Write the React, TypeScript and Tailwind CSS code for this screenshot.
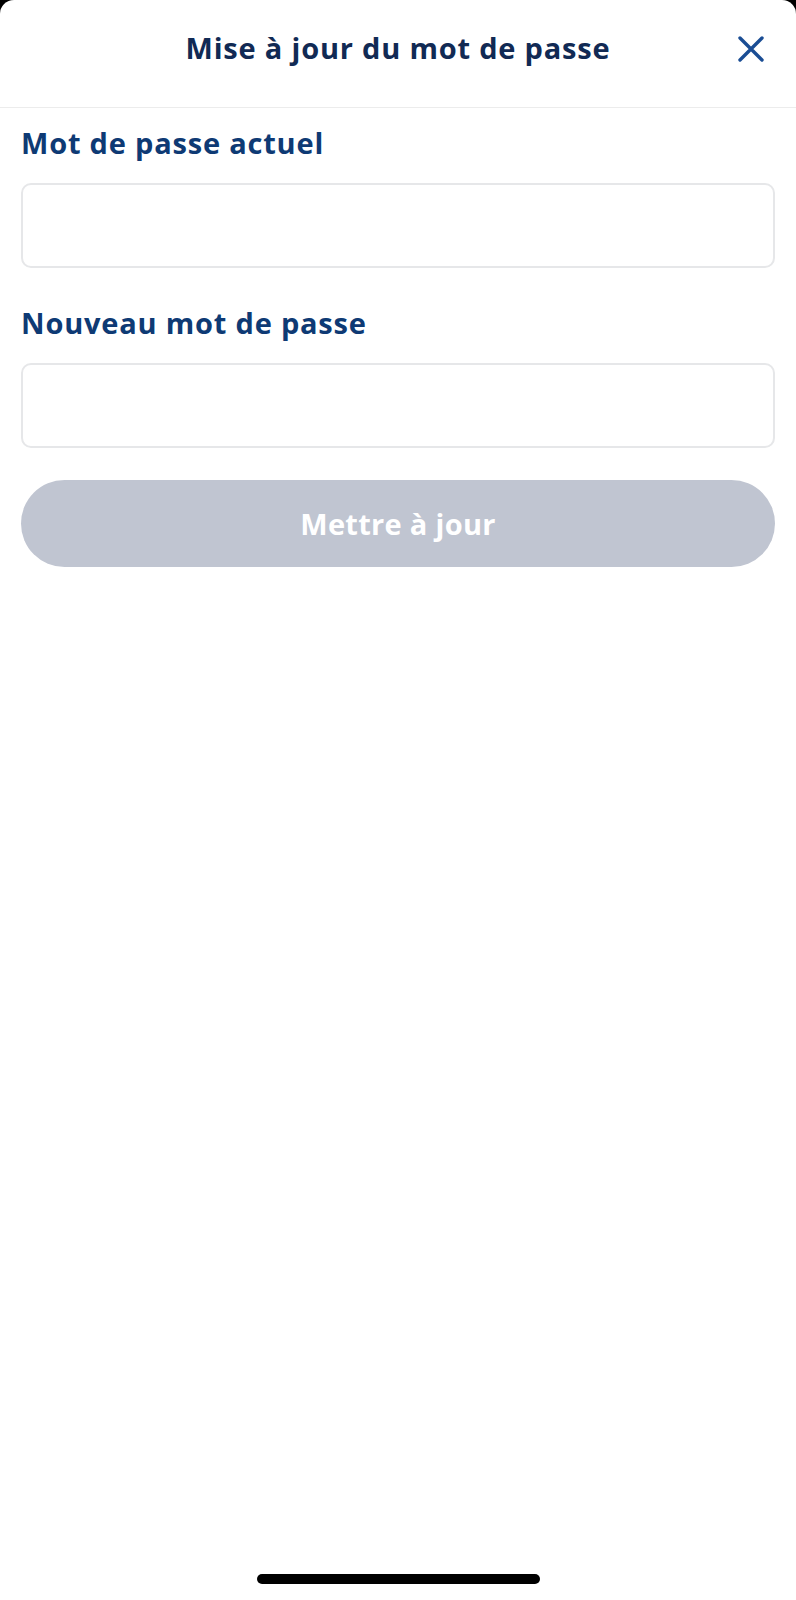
import React from "react";

export default function App() {
  const font = { fontFamily: "'Open Sans', 'Noto Sans', sans-serif" };
  return (
    <div className="w-full h-[1600px] bg-black" style={font}>
      <div className="relative flex h-full flex-col bg-white rounded-t-[14px]">
        <header className="grid h-[108px] grid-cols-[1fr_auto_1fr] border-b border-[#ececec] pt-[30px]">
          <div />
          <h1 className="text-[29px] leading-[36px] font-bold tracking-[0.8px] text-[#112a54]">Mise à jour du mot de passe</h1>
          <div className="flex justify-end pr-[32px] pt-[6px]">
            <svg width="26" height="26" viewBox="0 0 26 26" fill="none">
              <path d="M2 2 L24 24 M24 2 L2 24" stroke="#1a4d94" strokeWidth="3.4" strokeLinecap="round" />
            </svg>
          </div>
        </header>
        <main className="flex flex-col px-[21px] pt-[17px]">
          <label className="text-[29px] leading-[36px] font-bold tracking-[0.8px] text-[#0e3a74]">Mot de passe actuel</label>
          <input type="password" className="mt-[22px] h-[85px] w-full rounded-[10px] border-2 border-[#e6e7e9] bg-white outline-none" />
          <label className="mt-[37px] text-[29px] leading-[36px] font-bold tracking-[0.8px] text-[#0e3a74]">Nouveau mot de passe</label>
          <input type="password" className="mt-[22px] h-[85px] w-full rounded-[10px] border-2 border-[#e6e7e9] bg-white outline-none" />
          <button className="mt-[32px] h-[87px] w-full rounded-full bg-[#c0c5d1] text-[29px] font-bold tracking-[0.3px] text-white">Mettre à jour</button>
        </main>
        <div className="mt-auto flex justify-center pb-[16px]">
          <div className="h-[10px] w-[283px] rounded-full bg-black" />
        </div>
      </div>
    </div>
  );
}
